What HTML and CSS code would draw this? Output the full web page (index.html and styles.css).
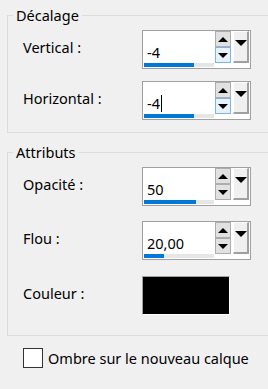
FILE: index.html
```html
<!DOCTYPE html>
<html lang="fr">
<head>
  <meta charset="UTF-8">
  <title>Ombre portée</title>
  <link rel="stylesheet" href="styles.css">
</head>
<body>
  <div class="dialog">
    <fieldset class="group group-offset">
      <legend>Décalage</legend>
      <div class="row row-first">
        <label class="label">Vertical :</label>
        <div class="spin">
          <div class="field">
            <span class="value">-4</span>
            <div class="track"><div class="fill" style="width: 50px"></div></div>
          </div>
          <div class="steps">
            <div class="step up"></div>
            <div class="step down hot"></div>
          </div>
          <div class="drop"></div>
        </div>
      </div>
      <div class="row">
        <label class="label">Horizontal :</label>
        <div class="spin">
          <div class="field">
            <span class="value">-4<span class="caret"></span></span>
            <div class="track"><div class="fill" style="width: 50px"></div></div>
          </div>
          <div class="steps">
            <div class="step up"></div>
            <div class="step down hot"></div>
          </div>
          <div class="drop"></div>
        </div>
      </div>
    </fieldset>

    <fieldset class="group group-attr">
      <legend>Attributs</legend>
      <div class="row row-first">
        <label class="label">Opacité :</label>
        <div class="spin">
          <div class="field">
            <span class="value">50</span>
            <div class="track"><div class="fill" style="width: 52px"></div></div>
          </div>
          <div class="steps">
            <div class="step up"></div>
            <div class="step down"></div>
          </div>
          <div class="drop"></div>
        </div>
      </div>
      <div class="row row-blur">
        <label class="label">Flou :</label>
        <div class="spin">
          <div class="field">
            <span class="value">20,00</span>
            <div class="track"><div class="fill" style="width: 20px"></div></div>
          </div>
          <div class="steps">
            <div class="step up"></div>
            <div class="step down"></div>
          </div>
          <div class="drop"></div>
        </div>
      </div>
      <div class="row row-color">
        <label class="label">Couleur :</label>
        <div class="swatch"></div>
      </div>
    </fieldset>

    <label class="check">
      <span class="box"></span>
      <span>Ombre sur le nouveau calque</span>
    </label>
  </div>
</body>
</html>
```

FILE: styles.css
```css
body {
  margin: 0;
  background: #f0f0f0;
  font-family: 'Noto Sans', 'Open Sans', sans-serif;
  font-size: 14.5px;
  color: #000;
}
.dialog {
  width: 268px;
  height: 389px;
  overflow: hidden;
  padding-top: 5px;
  box-sizing: border-box;
}
/* group box runs off the right edge of the window */
.group {
  margin: 0 0 0 7px;
  padding: 0;
  border: 1px solid #dcdcdc;
  border-right: none;
  min-width: 0;
}
.group legend {
  margin-left: 5px;
  padding: 0 3px;
  line-height: 20px;
}
.group-offset {
  padding-bottom: 12px;
}
.group-attr {
  margin-top: 9px;
  padding-bottom: 20px;
}
.row {
  display: flex;
  align-items: center;
  margin-top: 12px;
  padding-left: 15px;
}
.row-first {
  margin-top: 5px;
}
.row-blur {
  margin-top: 15px;
}
.row-color {
  margin-top: 16px;
}
.label {
  width: 119px;
  line-height: 20px;
  margin-top: -6px;
}
.spin {
  display: flex;
  width: 109px;
  height: 39px;
  box-sizing: border-box;
  border: 1px solid #a0a0a0;
  background: #fff;
  padding: 0 1px 0 1px;
}
.field {
  flex: 1;
  display: flex;
  flex-direction: column;
  padding-top: 11px;
}
.value {
  padding-left: 3px;
  line-height: 20px;
  display: flex;
  align-items: center;
}
.caret {
  display: inline-block;
  width: 1px;
  height: 17px;
  background: #000;
  margin-left: 1px;
}
.track {
  margin-top: auto;
  margin-bottom: 1px;
  width: 70px;
  height: 4px;
  background: #e6e6e6;
}
.fill {
  height: 100%;
  background: #0078d7;
}
.steps {
  display: flex;
  flex-direction: column;
  width: 16px;
  margin-right: 2px;
}
.step {
  height: 16px;
  box-sizing: border-box;
  border: 1px solid #adadad;
  background: #e1e1e1;
  display: flex;
  align-items: center;
  justify-content: center;
}
.step::after {
  content: '';
  border-left: 5px solid transparent;
  border-right: 5px solid transparent;
}
.up::after {
  border-bottom: 5px solid #000;
}
.down::after {
  border-top: 5px solid #000;
}
.step.hot {
  background: #e5f1fb;
  border-color: #7eb4ea;
}
.drop {
  width: 16px;
  height: 32px;
  box-sizing: border-box;
  background: #f0f0f0;
  border-top: 1px solid #fff;
  border-left: 1px solid #fff;
  border-right: 2px solid #a0a0a0;
  border-bottom: 2px solid #a0a0a0;
  display: flex;
  justify-content: center;
  padding-top: 8px;
}
.drop::after {
  content: '';
  border-left: 6px solid transparent;
  border-right: 6px solid transparent;
  border-top: 6px solid #000;
  height: 0;
}
.swatch {
  width: 88px;
  height: 39px;
  box-sizing: border-box;
  background: #000;
  border-top: 1px solid #a0a0a0;
  border-left: 1px solid #a0a0a0;
  border-right: 1px solid #fff;
  border-bottom: 1px solid #fff;
}
.check {
  display: flex;
  align-items: center;
  margin: 12px 0 0 23px;
}
.check .box {
  width: 20px;
  height: 20px;
  box-sizing: border-box;
  border: 1px solid #333;
  background: #fff;
  margin-right: 5px;
}
```
